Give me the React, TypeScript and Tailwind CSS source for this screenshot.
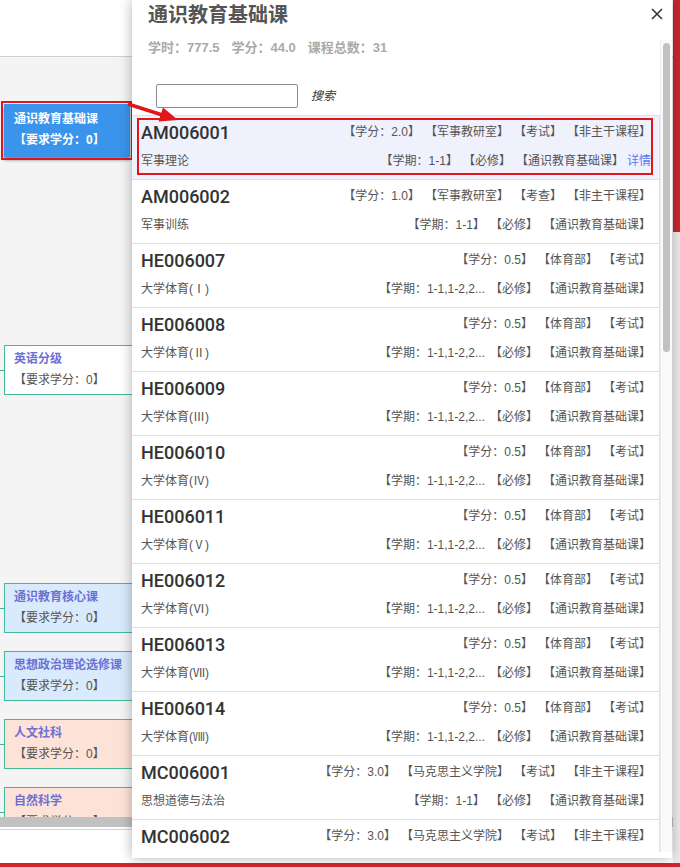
import React from 'react';

type Course = {
  code: string;
  name: string;
  top: string[];
  term: string;
  active?: boolean;
};

const pe = ['Ⅰ', 'Ⅱ', 'Ⅲ', 'Ⅳ', 'Ⅴ', 'Ⅵ', 'Ⅶ', 'Ⅷ'];

const courses: Course[] = [
  { code: 'AM006001', name: '军事理论', top: ['【学分：2.0】', '【军事教研室】', '【考试】', '【非主干课程】'], term: '【学期：1-1】', active: true },
  { code: 'AM006002', name: '军事训练', top: ['【学分：1.0】', '【军事教研室】', '【考查】', '【非主干课程】'], term: '【学期：1-1】' },
  ...pe.map((r, i) => ({
    code: 'HE0060' + String(7 + i).padStart(2, '0'),
    name: `大学体育(${r})`,
    top: ['【学分：0.5】', '【体育部】', '【考试】'],
    term: '【学期：1-1,1-2,2...',
  })),
  { code: 'MC006001', name: '思想道德与法治', top: ['【学分：3.0】', '【马克思主义学院】', '【考试】', '【非主干课程】'], term: '【学期：1-1】' },
  { code: 'MC006002', name: '', top: ['【学分：3.0】', '【马克思主义学院】', '【考试】', '【非主干课程】'], term: '【学期：1-1】' },
];

const nodes = [
  { title: '英语分级', bg: 'bg-white', mt: 'mt-[188px]' },
  { title: '通识教育核心课', bg: 'bg-[#d8eafb]', mt: 'mt-[188px]' },
  { title: '思想政治理论选修课', bg: 'bg-[#d8eafb]', mt: 'mt-[18px]' },
  { title: '人文社科', bg: 'bg-[#fde3d7]', mt: 'mt-[18px]' },
  { title: '自然科学', bg: 'bg-[#fde3d7]', mt: 'mt-[18px]' },
];

const font = "font-['Liberation_Sans','Noto_Sans_CJK_SC',sans-serif]";

function Row({ c }: { c: Course }) {
  return (
    <div className={`relative h-[64px] shrink-0 border-b border-[#f6d5db] pl-[9px] pr-[8px] flex flex-col ${c.active ? 'bg-[#eff1fd]' : ''}`}>
      <div className="h-[32px] flex items-center justify-between">
        <span className="font-['Roboto',sans-serif] text-[18px] font-medium text-[#333]">{c.code}</span>
        <div className="flex text-[12px] text-[#555]">
          {c.top.map((t, i) => (
            <span key={i} className="ml-[5px] whitespace-nowrap">{t}</span>
          ))}
        </div>
      </div>
      <div className="h-[26px] flex items-center justify-between text-[12px] text-[#555]">
        <span>{c.name}</span>
        <div className="flex items-center">
          <span className="whitespace-nowrap">{c.term}</span>
          <span className="ml-[5px] whitespace-nowrap">【必修】</span>
          <span className="ml-[5px] whitespace-nowrap">【通识教育基础课】</span>
          {c.active && <span className="ml-[3px] text-[#5a78f0]">详情</span>}
        </div>
      </div>
      {c.active && <div className="absolute left-[5px] right-[6px] top-[2px] bottom-[4px] border-2 border-[#e0161b]" />}
    </div>
  );
}

export default function App() {
  return (
    <div className={`relative w-[680px] h-[867px] overflow-hidden bg-white flex ${font}`}>
      {/* page behind the dialog */}
      <div className="flex-1 flex flex-col">
        <div className="h-[57px] shrink-0 bg-white border-b border-[#cfcfcf]" />
        <div className="h-[760px] shrink-0 bg-[#f4f4f4] flex flex-col overflow-hidden">
          <div className="relative mt-[47px] ml-[4px] w-[126px] h-[53px] shrink-0 bg-[#3a94ec] outline-2 outline-offset-1 outline-[#e0161b] shadow-[0_3px_3px_rgba(0,0,0,0.45)] pl-[10px] pt-[5px] text-[12px] font-bold text-white">
            <div className="h-[20px] flex items-center">通识教育基础课</div>
            <div className="h-[22px] flex items-center">【要求学分：0】</div>
          </div>
          {nodes.map((n) => (
            <div key={n.title} className={`${n.mt} flex items-center shrink-0`}>
              <div className="w-[4px] h-px bg-[#3cb496]" />
              <div className={`w-[140px] h-[50px] border border-[#45b89c] ${n.bg} pl-[9px] pt-[2px] text-[12px]`}>
                <div className="h-[21px] flex items-center font-bold text-[#6d6fd3]">{n.title}</div>
                <div className="h-[21px] flex items-center text-[#555]">【要求学分：0】</div>
              </div>
            </div>
          ))}
        </div>
        <div className="h-[10px] shrink-0 bg-[#c1c1c1]" />
        <div className="h-[2px] shrink-0 bg-white" />
        <div className="flex-1 border-t border-[#d4d4d4] bg-white" />
        <div className="h-[4px] shrink-0 bg-[#d3262b]" />
      </div>
      <div className="w-[7px] flex flex-col">
        <div className="h-[232px] bg-[#c8272d]" />
        <div className="flex-1 bg-[#ececec]" />
        <div className="h-[4px] bg-[#d3262b]" />
      </div>

      {/* dialog */}
      <div className="absolute left-[132px] top-0 w-[540px] h-[858px] bg-white shadow-[0_0_12px_rgba(0,0,0,0.3)] flex flex-col">
        <div className="h-[40px] shrink-0 flex justify-between pl-[16px] pr-[9px]">
          <span className="mt-[2px] text-[20px] leading-[26px] font-bold text-[#555]">通识教育基础课</span>
          <svg width="12" height="12" viewBox="0 0 12 12" className="mt-[8px]">
            <path d="M1 1L11 11M11 1L1 11" stroke="#333" strokeWidth="1.6" />
          </svg>
        </div>
        <div className="flex-1 flex overflow-hidden mb-[6px]">
          <div className="flex-1 flex flex-col overflow-hidden">
            <div className="h-[16px] shrink-0 pl-[16px] flex items-center gap-[12px] text-[13px] font-bold text-[#aaa]">
              <span>学时：777.5</span>
              <span>学分：44.0</span>
              <span>课程总数：31</span>
            </div>
            <div className="mt-[28px] shrink-0 pl-[24px] flex items-center">
              <div className="w-[142px] h-[24px] border border-[#8a8a8a] rounded-[2px]" />
              <span className="ml-[13px] text-[12px] italic text-[#333]">搜索</span>
            </div>
            <div className="mt-[7px] border-t border-[#f6d5db] border-r flex flex-col">
              {courses.map((c) => (
                <Row key={c.code} c={c} />
              ))}
            </div>
          </div>
          <div className="w-[12px] shrink-0 bg-[#fafafa] border-l border-[#ececec] pt-[3px] flex justify-center">
            <div className="w-[7px] h-[309px] rounded-full bg-[#c1c1c1]" />
          </div>
        </div>
      </div>

      {/* arrow from node to row */}
      <svg className="absolute left-0 top-0" width="680" height="867" viewBox="0 0 680 867">
        <line x1="128" y1="104" x2="164" y2="115.5" stroke="#e0161b" strokeWidth="3.5" />
        <polygon points="178,120 163,107.5 158.5,121.5" fill="#e0161b" />
      </svg>
    </div>
  );
}
